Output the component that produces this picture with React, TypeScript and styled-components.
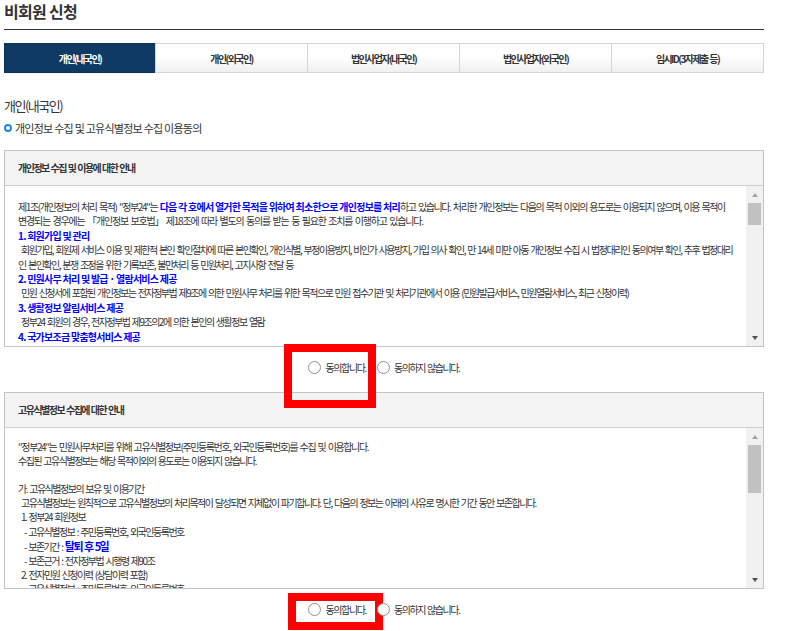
import React from 'react'
import styled, { createGlobalStyle } from 'styled-components'

const GlobalStyle = createGlobalStyle`
	html, body {
		margin: 0;
		padding: 0;
		background: #fff;
		overflow: hidden;
	}
	body {
		font-family: "Noto Sans CJK KR", "Noto Sans", sans-serif;
		color: #333;
	}
`

const tabs = ['개인(내국인)', '개인(외국인)', '법인사업자(내국인)', '법인사업자(외국인)', '임시ID(3자제출 등)']

function AgreeRow({ marked }: { marked: 'wide' | 'narrow' }) {
	return (
		<Agree>
			<Choice>
				<Radio />
				<span>동의합니다.</span>
				<Marker $kind={marked} />
			</Choice>
			<Choice>
				<Radio />
				<span>동의하지 않습니다.</span>
			</Choice>
		</Agree>
	)
}

function ScrollBar({ thumb }: { thumb: number }) {
	return (
		<Scroll>
			<ArrowBox>
				<ArrowUp />
			</ArrowBox>
			<Track>
				<Thumb $height={thumb} />
			</Track>
			<ArrowBox>
				<ArrowDown />
			</ArrowBox>
		</Scroll>
	)
}

export default function App() {
	return (
		<Page>
			<GlobalStyle />
			<Title>비회원 신청</Title>
			<Tabs>
				{tabs.map((tab, i) => (
					<Tab key={tab} $active={i === 0}>
						{tab}
					</Tab>
				))}
			</Tabs>
			<SectionTitle>개인(내국인)</SectionTitle>
			<SubTitle>개인정보 수집 및 고유식별정보 수집 이용동의</SubTitle>

			<Panel>
				<PanelHead>개인정보 수집 및 이용에 대한 안내</PanelHead>
				<PanelBody>
					<PanelText $top={14} $lineHeight={14.4}>
						<Line $spacing={-1.4}>
							제1조(개인정보의 처리 목적) "정부24"는 <Strong>다음 각 호에서 열거한 목적을 위하여 최소한으로 개인정보를 처리</Strong>
							하고 있습니다. 처리한 개인정보는 다음의 목적 이외의 용도로는 이용되지 않으며, 이용 목적이
						</Line>
						<Line $spacing={-1.2}>변경되는 경우에는 「개인정보 보호법」 제18조에 따라 별도의 동의를 받는 등 필요한 조치를 이행하고 있습니다.</Line>
						<Line>
							<Strong>1. 회원가입 및 관리</Strong>
						</Line>
						<Line $indent={3}>
							회원가입, 회원제 서비스 이용 및 제한적 본인 확인절차에 따른 본인확인, 개인식별, 부정이용방지, 비인가 사용방지, 가입 의사 확인, 만 14세 미만 아동 개인정보 수집 시 법정대리인 동의여부 확인, 추후 법정대리
						</Line>
						<Line>인 본인확인, 분쟁 조정을 위한 기록보존, 불만처리 등 민원처리, 고지사항 전달 등</Line>
						<Line>
							<Strong>2. 민원사무 처리 및 발급 · 열람서비스 제공</Strong>
						</Line>
						<Line $indent={3}>
							민원 신청서에 포함된 개인정보는 전자정부법 제9조에 의한 민원사무 처리를 위한 목적으로 민원 접수기관 및 처리기관에서 이용 (민원발급서비스, 민원열람서비스, 최근 신청이력)
						</Line>
						<Line>
							<Strong>3. 생활정보 알림서비스 제공</Strong>
						</Line>
						<Line $indent={3}>정부24 회원의 경우, 전자정부법 제9조의2에 의한 본인의 생활정보 열람</Line>
						<Line>
							<Strong>4. 국가보조금 맞춤형서비스 제공</Strong>
						</Line>
					</PanelText>
					<ScrollBar thumb={22} />
				</PanelBody>
			</Panel>
			<AgreeRow marked="wide" />

			<Panel>
				<PanelHead>고유식별정보 수집에 대한 안내</PanelHead>
				<PanelBody>
					<PanelText $top={12} $lineHeight={14.1}>
						<Line $spacing={-1.4}>"정부24"는 민원사무처리를 위해 고유식별정보(주민등록번호, 외국인등록번호)를 수집 및 이용합니다.</Line>
						<Line>수집된 고유식별정보는 해당 목적이외의 용도로는 이용되지 않습니다.</Line>
						<Line>&nbsp;</Line>
						<Line>가. 고유식별정보의 보유 및 이용기간</Line>
						<Line $indent={3}>
							고유식별정보는 원칙적으로 고유식별정보의 처리목적이 달성되면 지체없이 파기합니다. 단, 다음의 정보는 아래의 사유로 명시한 기간 동안 보존합니다.
						</Line>
						<Line $indent={3}>1. 정부24 회원정보</Line>
						<Line $indent={6}>- 고유식별정보 : 주민등록번호, 외국인등록번호</Line>
						<Line $indent={6}>
							- 보존기간 : <Strong $large>탈퇴 후 5일</Strong>
						</Line>
						<Line $indent={6}>- 보존근거 : 전자정부법 시행령 제90조</Line>
						<Line $indent={3}>2. 전자민원 신청이력 (상담이력 포함)</Line>
						<Line $indent={6}>- 고유식별정보 : 주민등록번호, 외국인등록번호</Line>
					</PanelText>
					<ScrollBar thumb={48} />
				</PanelBody>
			</Panel>
			<AgreeRow marked="narrow" />
		</Page>
	)
}

const Page = styled.div`
	width: 760px;
	height: 630px;
	margin-left: 4px;
	padding-top: 1px;
	overflow: hidden;
`

const Title = styled.h1`
	margin: 0;
	height: 28px;
	line-height: 20px;
	font-size: 16px;
	font-weight: 700;
	letter-spacing: -0.7px;
	color: #333;
	border-bottom: 1px solid #333;
`

const Tabs = styled.div`
	display: grid;
	grid-template-columns: repeat(5, 1fr);
	margin-top: 13px;
	height: 30px;
`

const Tab = styled.div<{ $active?: boolean }>`
	display: flex;
	align-items: center;
	justify-content: center;
	box-sizing: border-box;
	font-size: 10px;
	font-weight: 700;
	letter-spacing: -1.6px;
	word-spacing: 1px;
	margin-left: -1px;
	border: 1px solid ${(p) => (p.$active ? '#0c3358' : '#d5d5d5')};
	color: ${(p) => (p.$active ? '#fff' : '#333')};
	background: ${(p) => (p.$active ? '#0e3a63' : 'linear-gradient(#fff 40%, #f0f0f0)')};

	&:first-child {
		margin-left: 0;
	}
`

const SectionTitle = styled.h2`
	margin: 24px 0 0;
	height: 18px;
	line-height: 18px;
	font-size: 13px;
	font-weight: 400;
	letter-spacing: -1.5px;
	color: #333;
`

const SubTitle = styled.h3`
	display: flex;
	align-items: center;
	gap: 3px;
	margin: 4px 0 0;
	height: 18px;
	font-size: 11px;
	font-weight: 400;
	letter-spacing: -0.75px;
	color: #333;

	&::before {
		content: '';
		box-sizing: border-box;
		width: 8px;
		height: 8px;
		border: 2px solid #1e88d8;
		border-radius: 50%;
	}
`

const Panel = styled.section`
	box-sizing: border-box;
	height: 197px;
	margin-top: 13px;
	border: 1px solid #c4c4c4;

	& ~ & {
		margin-top: 0;
	}
`

const PanelHead = styled.div`
	box-sizing: border-box;
	display: flex;
	align-items: center;
	height: 35px;
	padding: 0 0 1px 13px;
	background: #f3f3f3;
	border-bottom: 1px solid #d0d0d0;
	font-size: 10px;
	font-weight: 700;
	letter-spacing: -1.5px;
	word-spacing: 1px;
	color: #333;
`

const PanelBody = styled.div`
	display: flex;
	height: 160px;
	background: #fff;
`

const PanelText = styled.div<{ $top: number; $lineHeight: number }>`
	flex: 1;
	min-width: 0;
	overflow: hidden;
	padding: ${(p) => p.$top}px 0 0 13px;
	line-height: ${(p) => p.$lineHeight}px;
`

const Line = styled.div<{ $indent?: number; $spacing?: number }>`
	padding-left: ${(p) => p.$indent || 0}px;
	font-size: 10px;
	letter-spacing: ${(p) => p.$spacing ?? -1.5}px;
	word-spacing: 1.5px;
	white-space: nowrap;
	color: #333;
`

const Strong = styled.strong<{ $large?: boolean }>`
	font-weight: 700;
	font-size: ${(p) => (p.$large ? '11px' : 'inherit')};
	letter-spacing: ${(p) => (p.$large ? '-1.5px' : '-0.75px')};
	word-spacing: ${(p) => (p.$large ? '1px' : '0')};
	color: #0000ff;
`

const Scroll = styled.div`
	display: flex;
	flex-direction: column;
	flex: none;
	width: 17px;
	background: #f1f1f1;
`

const ArrowBox = styled.div`
	display: flex;
	align-items: center;
	justify-content: center;
	height: 17px;
`

const ArrowUp = styled.i`
	width: 0;
	height: 0;
	border-left: 3.5px solid transparent;
	border-right: 3.5px solid transparent;
	border-bottom: 4px solid #a3a3a3;
`

const ArrowDown = styled.i`
	width: 0;
	height: 0;
	border-left: 3.5px solid transparent;
	border-right: 3.5px solid transparent;
	border-top: 4px solid #505050;
`

const Track = styled.div`
	flex: 1;
	padding: 0 2px;
`

const Thumb = styled.div<{ $height: number }>`
	height: ${(p) => p.$height}px;
	background: #c1c1c1;
`

const Agree = styled.div`
	display: flex;
	justify-content: center;
	align-items: flex-start;
	gap: 11px;
	height: 45px;
`

const Choice = styled.label`
	position: relative;
	display: flex;
	align-items: center;
	gap: 4px;
	height: 40px;
	font-size: 10px;
	letter-spacing: -1.4px;
	word-spacing: 1px;
	color: #333;
`

const Radio = styled.i`
	box-sizing: border-box;
	display: block;
	width: 13px;
	height: 13px;
	border: 1px solid #8f8f8f;
	border-radius: 50%;
	background: #fff;
`

const Marker = styled.b<{ $kind: 'wide' | 'narrow' }>`
	position: absolute;
	box-sizing: border-box;
	border: 8px solid #f00;
	left: ${(p) => (p.$kind === 'wide' ? '-24px' : '-20px')};
	top: ${(p) => (p.$kind === 'wide' ? '-3px' : '4px')};
	width: ${(p) => (p.$kind === 'wide' ? '92px' : '95px')};
	height: ${(p) => (p.$kind === 'wide' ? '64px' : '37px')};
`
